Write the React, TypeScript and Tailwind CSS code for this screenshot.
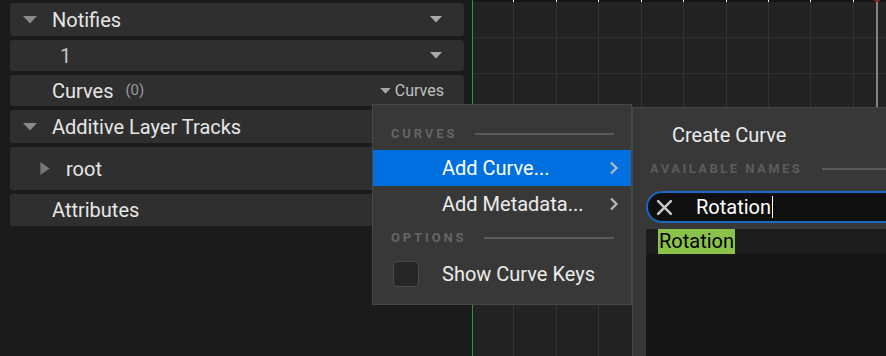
import React from 'react';

const font = "font-['Roboto','Liberation_Sans',sans-serif]";

const DownTri: React.FC<{ className?: string }> = ({ className = '' }) => (
  <svg viewBox="0 0 14 8" className={className} fill="currentColor">
    <path d="M0 0h14L7 7.5z" />
  </svg>
);

const RightTri: React.FC<{ className?: string }> = ({ className = '' }) => (
  <svg viewBox="0 0 10 14" className={className} fill="currentColor">
    <path d="M0 0l10 7-10 7z" />
  </svg>
);

const Chevron = () => (
  <svg viewBox="0 0 10 14" className="w-[10px] h-[14px] text-[#b8b8b8]" fill="none" stroke="currentColor" strokeWidth={2.2}>
    <path d="M2 1.5l5.5 5.5L2 12.5" />
  </svg>
);

const Row: React.FC<{ h?: string; children: React.ReactNode }> = ({ h = 'h-[33px]', children }) => (
  <div className={`${h} shrink-0 rounded-[3px] bg-[#2f2f2f] flex items-center relative`}>{children}</div>
);

const xs = [40, 83, 125, 168, 210, 253, 295, 337, 380];

export default function App() {
  return (
    <div className={`relative w-[886px] h-[356px] overflow-hidden bg-[#1b1b1b] flex ${font}`}>
      {/* track list */}
      <div className="w-[472px] h-full flex flex-col gap-[4px] pt-[3px] pl-[10px] pr-[8px]">
        <Row>
          <DownTri className="w-[14px] h-[8px] ml-[13px] text-[#8a8a8a]" />
          <span className="ml-[15px] text-[20px] text-[#e6e6e6]">Notifies</span>
          <DownTri className="w-[12px] h-[7px] ml-auto mr-[22px] text-[#a8a8a8]" />
        </Row>
        <Row h="h-[31px]">
          <span className="ml-[50px] text-[20px] text-[#c4c4c4]">1</span>
          <DownTri className="w-[12px] h-[7px] ml-auto mr-[22px] text-[#a8a8a8]" />
        </Row>
        <Row h="h-[31px]">
          <span className="ml-[42px] text-[20px] text-[#e6e6e6]">Curves</span>
          <span className="ml-[12px] text-[15px] text-[#9a9a9a]">(0)</span>
          <span className="ml-auto mr-[20px] flex items-center text-[16px] text-[#c0c0c0]">
            <DownTri className="w-[11px] h-[6px] mr-[4px] text-[#a8a8a8]" />
            Curves
          </span>
        </Row>
        <Row>
          <DownTri className="w-[14px] h-[8px] ml-[13px] text-[#8a8a8a]" />
          <span className="ml-[15px] text-[20px] text-[#e6e6e6]">Additive Layer Tracks</span>
        </Row>
        <Row h="h-[43px]">
          <RightTri className="w-[10px] h-[13px] ml-[30px] text-[#777]" />
          <span className="ml-[16px] text-[20px] text-[#e6e6e6]">root</span>
        </Row>
        <Row h="h-[32px]">
          <span className="ml-[42px] text-[20px] text-[#e6e6e6]">Attributes</span>
        </Row>
      </div>

      <div className="w-px h-full bg-[#23a123]" />

      {/* curve grid */}
      <div className="flex-1 h-full relative bg-[#232323]">
        <svg width="413" height="356" className="block">
          <rect x="0" y="0" width="413" height="2" fill="#161616" />
          {xs.map(x => (
            <line key={x} x1={x + 0.5} y1="2" x2={x + 0.5} y2="356" stroke="#333" strokeWidth="1" />
          ))}
          {xs.map(x => (
            <line key={'t' + x} x1={x + 0.5} y1="0" x2={x + 0.5} y2="2" stroke="#fff" strokeWidth="1" />
          ))}
          <line x1="0" y1="37.5" x2="413" y2="37.5" stroke="#303030" />
          <line x1="0" y1="73.5" x2="413" y2="73.5" stroke="#303030" />
          <line x1="404" y1="0" x2="404" y2="356" stroke="#a3a3a3" strokeWidth="1.5" />
          <circle cx="404" cy="-2" r="4" fill="#7a2a22" />
        </svg>
      </div>

      {/* context menu */}
      <div className="absolute left-[372px] top-[104px] w-[260px] h-[201px] bg-[#383838] border border-[#474747] flex flex-col">
        <div className="h-[45px] pt-[12px] flex items-center pl-[18px] pr-[17px] shrink-0">
          <span className="text-[13px] font-bold tracking-[0.22em] text-[#656565]">CURVES</span>
          <div className="ml-[18px] flex-1 h-[2px] bg-[#5a5a5a]" />
        </div>
        <div className="h-[36px] shrink-0 bg-[#0070e0] flex items-center pl-[69px] pr-[12px]">
          <span className="text-[20px] text-white">Add Curve...</span>
          <span className="ml-auto"><Chevron /></span>
        </div>
        <div className="h-[36px] shrink-0 flex items-center pl-[69px] pr-[12px]">
          <span className="text-[20px] text-[#ececec]">Add Metadata...</span>
          <span className="ml-auto"><Chevron /></span>
        </div>
        <div className="h-[32px] shrink-0 flex items-center pl-[18px] pr-[17px]">
          <span className="text-[13px] font-bold tracking-[0.22em] text-[#656565]">OPTIONS</span>
          <div className="ml-[18px] flex-1 h-[2px] bg-[#5a5a5a]" />
        </div>
        <div className="h-[40px] shrink-0 flex items-center pl-[20px]">
          <div className="w-[26px] h-[26px] rounded-[4px] bg-[#262626] border border-[#4a4a4a]" />
          <span className="ml-[23px] text-[20px] text-[#ececec]">Show Curve Keys</span>
        </div>
      </div>

      {/* create curve sub-menu */}
      <div className="absolute left-[632px] top-[107px] right-0 bottom-0 bg-[#383838] border-l border-t border-[#454545] flex flex-col">
        <div className="h-[53px] shrink-0 flex items-center pl-[39px]">
          <span className="text-[20px] text-[#ececec]">Create Curve</span>
        </div>
        <div className="h-[15px] shrink-0 flex items-center pl-[17px]">
          <span className="text-[13px] font-bold tracking-[0.19em] text-[#5c5c5c] whitespace-nowrap">AVAILABLE NAMES</span>
          <div className="ml-[20px] flex-1 h-[2px] bg-[#5a5a5a]" />
        </div>
        <div className="mt-[15px] ml-[13px] h-[32px] shrink-0 rounded-l-full border-2 border-r-0 border-[#1d66c4] bg-[#0f0f0f] flex items-center">
          <svg viewBox="0 0 16 16" className="w-[17px] h-[17px] ml-[8px] text-[#c8c8c8]" stroke="currentColor" strokeWidth={2.4} strokeLinecap="round">
            <path d="M2 2l12 12M14 2L2 14" />
          </svg>
          <span className="ml-[23px] text-[20px] text-white">Rotation</span>
          <span className="ml-[1px] w-px h-[22px] bg-white" />
        </div>
        <div className="mt-[6px] ml-[13px] flex-1 bg-[#161616] flex flex-col">
          <div className="h-[25px] bg-[#1d1d1d] flex items-center pl-[12px]">
            <span className="bg-[#8bc34a] text-black text-[20px] leading-[25px] px-[1px]">Rotation</span>
          </div>
        </div>
      </div>
    </div>
  );
}
